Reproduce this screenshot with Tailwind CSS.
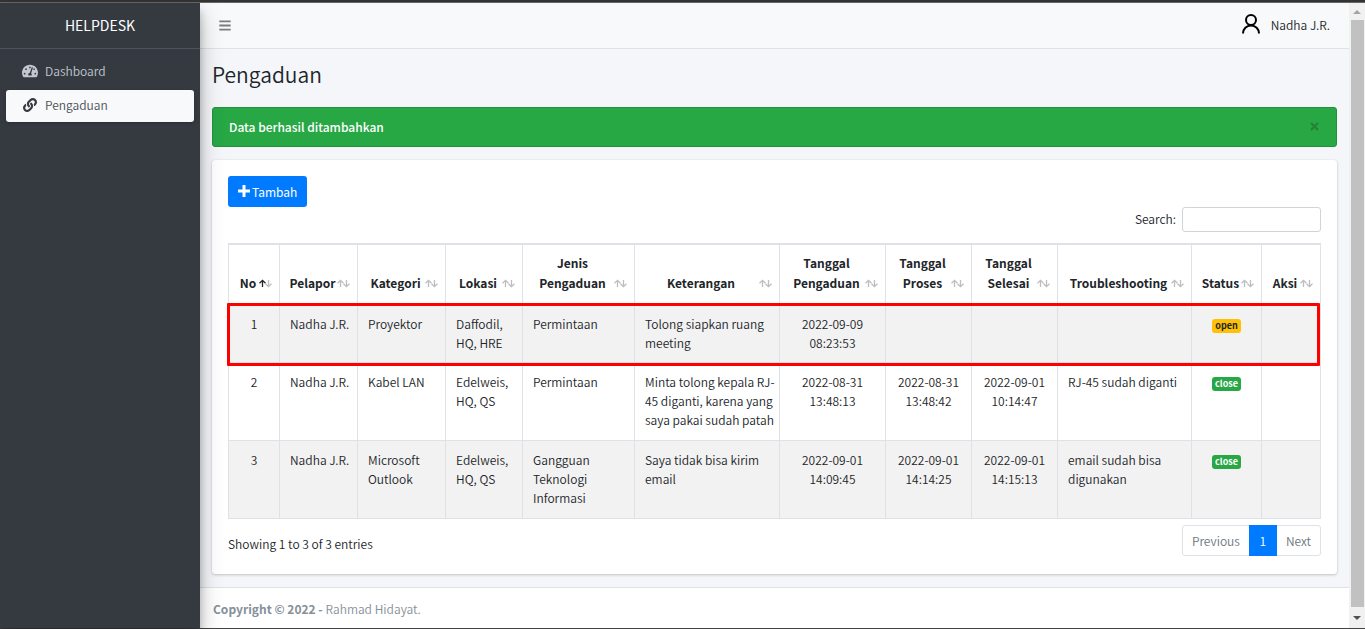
<!DOCTYPE html>
<html lang="id">
<head>
<meta charset="utf-8">
<title>Helpdesk - Pengaduan</title>
<script src="https://cdn.jsdelivr.net/npm/@tailwindcss/browser@4"></script>
</head>
<body class="flex h-screen flex-col overflow-hidden bg-[#f4f6f9] font-['Noto_Sans_CJK_SC','Source_Sans_Pro',sans-serif] text-[12px] leading-[19px] font-[350] text-[#212529]">
<svg class="hidden" aria-hidden="true">
  <symbol id="arrow-up" viewBox="0 0 7 9"><path d="M3.500 8V1.500M0.500 4.300L3.500 1.300L6.500 4.300" fill="none" stroke="currentColor" stroke-width="1.300"/></symbol>
  <symbol id="arrow-down" viewBox="0 0 7 9"><path d="M3.500 1V7.500M0.500 4.700L3.500 7.700L6.500 4.700" fill="none" stroke="currentColor" stroke-width="1.300"/></symbol>
</svg>
<div class="h-[3px] shrink-0 border-b border-[#666] bg-[#333]"></div>
<div class="flex min-h-0 flex-1">
  <aside class="z-10 w-[200px] shrink-0 bg-[#343a40] shadow-[0_11px_22px_rgba(0,0,0,0.25),0_8px_8px_rgba(0,0,0,0.22)]">
    <a href="#" class="flex h-[46px] items-center justify-center border-b border-[#4b545c] text-[14px] font-normal text-white">HELPDESK</a>
    <nav class="flex flex-col gap-[2px] px-[6px] pt-[7px]">
      <a href="#" class="flex h-8 items-center gap-[7px] rounded-[3px] pb-[3px] pl-4 text-[#c2c7d0]">
        <svg class="h-4 w-4" viewBox="0 0 576 512" fill="currentColor"><path d="M288 32C128.940 32 0 160.940 0 320c0 52.800 14.250 102.260 39.060 144.800 5.610 9.620 16.300 15.200 27.440 15.200h443c11.140 0 21.830-5.580 27.440-15.200C561.750 422.260 576 372.800 576 320c0-159.060-128.940-288-288-288zm0 64c14.710 0 26.580 10.130 30.320 23.650-1.110 2.260-2.640 4.230-3.450 6.670l-9.220 27.670c-5.130 3.490-10.970 6.010-17.640 6.010-17.670 0-32-14.330-32-32S270.330 96 288 96zM96 384c-17.670 0-32-14.330-32-32s14.330-32 32-32 32 14.330 32 32-14.330 32-32 32zm48-160c-17.670 0-32-14.330-32-32s14.330-32 32-32 32 14.330 32 32-14.330 32-32 32zm246.770-72.410l-61.330 184C343.130 347.330 352 364.540 352 384c0 11.720-3.380 22.550-8.880 32H232.880c-5.500-9.450-8.880-20.280-8.880-32 0-33.940 26.500-61.430 59.900-63.590l61.340-184.010c4.170-12.560 17.730-19.450 30.360-15.170 12.570 4.190 19.350 17.790 15.170 30.360zm14.660 57.200l15.520-46.550c3.470-1.290 7.130-2.230 11.050-2.230 17.670 0 32 14.330 32 32s-14.330 32-32 32c-11.380-.01-20.890-6.280-26.570-15.220zM480 384c-17.670 0-32-14.330-32-32s14.330-32 32-32 32 14.330 32 32-14.330 32-32 32z"/></svg>
        Dashboard
      </a>
      <a href="#" class="flex h-8 items-center gap-[7px] rounded-[3px] bg-[#f8f9fa] pb-[3px] pl-4 text-[#495057] shadow-[0_1px_3px_rgba(0,0,0,0.24)]">
        <svg class="h-[14px] w-4 text-[#343a40]" viewBox="0 0 512 512" fill="currentColor"><path d="M326.612 185.391c59.747 59.809 58.927 155.698.36 214.590-.11.12-.24.25-.36.37l-67.200 67.200c-59.270 59.270-155.699 59.262-214.960 0-59.270-59.260-59.270-155.700 0-214.960l37.106-37.106c9.840-9.840 26.786-3.300 27.294 10.606.648 17.722 3.826 35.527 9.690 52.721 1.986 5.822.567 12.262-3.783 16.612l-13.087 13.087c-28.026 28.026-28.905 73.660-1.155 101.960 28.024 28.579 74.086 28.749 102.325.51l67.200-67.190c28.191-28.191 28.073-73.757 0-101.830-3.701-3.694-7.429-6.564-10.341-8.569a16.037 16.037 0 0 1-6.947-12.606c-.396-10.567 3.348-21.456 11.698-29.806l21.054-21.055c5.521-5.521 14.182-6.199 20.584-1.731a152.482 152.482 0 0 1 20.522 17.197zM467.547 44.449c-59.261-59.262-155.690-59.270-214.960 0l-67.200 67.200c-.12.12-.25.25-.36.37-58.566 58.892-59.387 154.781.36 214.590a152.454 152.454 0 0 0 20.521 17.196c6.402 4.468 15.064 3.789 20.584-1.731l21.054-21.055c8.350-8.350 12.094-19.239 11.698-29.806a16.037 16.037 0 0 0-6.947-12.606c-2.912-2.005-6.640-4.875-10.341-8.569-28.073-28.073-28.191-73.639 0-101.830l67.200-67.190c28.239-28.239 74.300-28.069 102.325.51 27.750 28.300 26.872 73.934-1.155 101.960l-13.087 13.087c-4.350 4.350-5.769 10.790-3.783 16.612 5.864 17.194 9.042 34.999 9.690 52.721.509 13.906 17.454 20.446 27.294 10.606l37.106-37.106c59.271-59.259 59.271-155.699.001-214.959z"/></svg>
        Pengaduan
      </a>
    </nav>
  </aside>

  <div class="flex min-w-0 flex-1 flex-col">
    <header class="flex h-[46px] shrink-0 items-center justify-between border-b border-[#dee2e6] bg-[#f8f9fa] px-[19px]">
      <button type="button" aria-label="Menu" class="text-[#7b7c7d]">
        <svg class="h-[13px] w-3" viewBox="0 0 448 512" fill="currentColor"><path d="M0 60h448v72H0zM0 220h448v72H0zM0 380h448v72H0z"/></svg>
      </button>
      <a href="#" class="flex items-center gap-[11px] pb-[2px]">
        <svg class="mb-[2px] h-5 w-[18px] text-black" viewBox="0 0 18 20" fill="none" stroke="currentColor" stroke-width="2"><circle cx="9" cy="6" r="5"/><path d="M1 19.500C1 15 4.500 11.500 9 11.500S17 15 17 19.500"/></svg>
        Nadha J.R.
      </a>
    </header>

    <main class="min-h-0 flex-1 px-3 pt-[10px]">
      <h1 class="text-[21px] leading-[30px]">Pengaduan</h1>
      <div role="alert" class="mt-[18px] flex h-10 items-center justify-between rounded-[3px] border border-[#23923d] bg-[#28a745] px-4 pb-[2px] font-medium text-white">
        Data berhasil ditambahkan
        <button type="button" aria-label="Tutup" class="pr-px text-[#1c7430]/70">
          <svg class="h-[9px] w-[9px]" viewBox="0 0 9 9" fill="none" stroke="currentColor" stroke-width="2"><path d="M1 1L8 8M8 1L1 8"/></svg>
        </button>
      </div>

      <section class="mt-[13px] rounded-[3px] bg-white px-4 pt-4 pb-[18px] shadow-[0_0_1px_rgba(0,0,0,0.125),0_1px_3px_rgba(0,0,0,0.2)]">
        <button type="button" class="flex h-[31px] items-center gap-[2px] rounded-[3px] bg-[#007bff] px-[10px] pb-px font-normal text-white">
          <svg class="h-3 w-3" viewBox="0 0 12 12" fill="currentColor"><path d="M4.500 0h3v4.500H12v3H7.500V12h-3V7.500H0v-3h4.500z"/></svg>
          Tambah
        </button>
        <div class="flex items-center justify-end gap-[6px]">
          <label for="search" class="pb-[3px]">Search:</label>
          <input id="search" type="search" class="h-[25px] w-[139px] rounded-[3px] border border-[#ced4da] bg-white px-2 outline-none">
        </div>

        <table class="mt-[11px] w-full table-fixed border-separate border-spacing-0 border-t-2 border-r border-[#dee2e6] [&_td]:border-b [&_td]:border-l [&_td]:border-[#dee2e6] [&_td]:pt-[9px] [&_td]:pr-[3px] [&_td]:pb-[11px] [&_td]:pl-[10px] [&_td]:align-top [&_td.text-center]:px-2 [&_th]:border-b [&_th]:border-l [&_th]:border-[#dee2e6]">
          <colgroup>
            <col class="w-[51px]"><col class="w-[78px]"><col class="w-[88px]"><col class="w-[77px]"><col class="w-[112px]"><col class="w-[145px]"><col class="w-[106px]"><col class="w-[86px]"><col class="w-[86px]"><col class="w-[134px]"><col class="w-[70px]"><col class="w-[59px]">
          </colgroup>
          <thead class="leading-5 [&_th]:h-[60px] [&_th]:pr-[7px] [&_th]:pb-[11px] [&_th]:pl-2 [&_th]:align-bottom [&_th>div]:flex [&_th>div]:items-end [&_th>div]:justify-between [&_th>div>span:first-child]:flex-1 [&_th>div>span:last-child]:flex [&_th>div>span:last-child]:h-5 [&_th>div>span:last-child]:items-center [&_th>div>span:last-child]:text-[#bdbebf] [&_svg]:h-[9px] [&_svg]:w-[7px] [&_svg+svg]:-ml-px">
            <tr>
              <th><div><span>No</span><span><svg class="text-[#212529]"><use href="#arrow-up"/></svg><svg><use href="#arrow-down"/></svg></span></div></th>
              <th><div><span>Pelapor</span><span><svg><use href="#arrow-up"/></svg><svg><use href="#arrow-down"/></svg></span></div></th>
              <th><div><span>Kategori</span><span><svg><use href="#arrow-up"/></svg><svg><use href="#arrow-down"/></svg></span></div></th>
              <th><div><span>Lokasi</span><span><svg><use href="#arrow-up"/></svg><svg><use href="#arrow-down"/></svg></span></div></th>
              <th><div><span>Jenis<br>Pengaduan</span><span><svg><use href="#arrow-up"/></svg><svg><use href="#arrow-down"/></svg></span></div></th>
              <th><div><span>Keterangan</span><span><svg><use href="#arrow-up"/></svg><svg><use href="#arrow-down"/></svg></span></div></th>
              <th><div><span>Tanggal<br>Pengaduan</span><span><svg><use href="#arrow-up"/></svg><svg><use href="#arrow-down"/></svg></span></div></th>
              <th><div><span>Tanggal<br>Proses</span><span><svg><use href="#arrow-up"/></svg><svg><use href="#arrow-down"/></svg></span></div></th>
              <th><div><span>Tanggal<br>Selesai</span><span><svg><use href="#arrow-up"/></svg><svg><use href="#arrow-down"/></svg></span></div></th>
              <th><div><span>Troubleshooting</span><span><svg><use href="#arrow-up"/></svg><svg><use href="#arrow-down"/></svg></span></div></th>
              <th><div><span>Status</span><span><svg><use href="#arrow-up"/></svg><svg><use href="#arrow-down"/></svg></span></div></th>
              <th><div><span>Aksi</span><span><svg><use href="#arrow-up"/></svg><svg><use href="#arrow-down"/></svg></span></div></th>
            </tr>
          </thead>
          <tbody>
            <tr class="relative bg-[#f2f2f2] [&>td]:pb-[10px]">
              <td class="text-center">1<div class="pointer-events-none absolute -top-[2px] right-0 -bottom-[3px] -left-px rounded-[1px] border-3 border-[#ff0000]"></div></td><td>Nadha J.R.</td><td>Proyektor</td><td>Daffodil, HQ, HRE</td><td>Permintaan</td><td>Tolong siapkan ruang meeting</td><td class="text-center">2022-09-09 08:23:53</td><td></td><td></td><td></td>
              <td class="text-center"><span class="inline-block rounded-[3px] bg-[#ffc107] px-[3px] text-[9px] leading-[14px] font-bold">open</span></td><td></td>
            </tr>
            <tr>
              <td class="text-center">2</td><td>Nadha J.R.</td><td>Kabel LAN</td><td>Edelweis, HQ, QS</td><td>Permintaan</td><td>Minta tolong kepala RJ-<wbr>45 diganti, karena yang saya pakai sudah patah</td><td class="text-center">2022-08-31 13:48:13</td><td class="text-center">2022-08-31 13:48:42</td><td class="text-center">2022-09-01 10:14:47</td><td>RJ-45 sudah diganti</td>
              <td class="text-center"><span class="inline-block rounded-[3px] bg-[#28a745] px-[3px] text-[9px] leading-[14px] font-bold text-white">close</span></td><td></td>
            </tr>
            <tr class="bg-[#f2f2f2]">
              <td class="text-center">3</td><td>Nadha J.R.</td><td>Microsoft Outlook</td><td>Edelweis, HQ, QS</td><td>Gangguan Teknologi Informasi</td><td>Saya tidak bisa kirim email</td><td class="text-center">2022-09-01 14:09:45</td><td class="text-center">2022-09-01 14:14:25</td><td class="text-center">2022-09-01 14:15:13</td><td>email sudah bisa digunakan</td>
              <td class="text-center"><span class="inline-block rounded-[3px] bg-[#28a745] px-[3px] text-[9px] leading-[14px] font-bold text-white">close</span></td><td></td>
            </tr>
          </tbody>
        </table>

        <div class="mt-[6px] flex items-center justify-between">
          <p class="pt-[5px]">Showing 1 to 3 of 3 entries</p>
          <nav aria-label="Halaman" class="flex h-[31px] rounded-[3px] border border-[#dee2e6] text-[#6c757d]">
            <button type="button" class="px-[9px] pb-px">Previous</button>
            <button type="button" class="-my-px w-7 bg-[#007bff] pb-px text-white">1</button>
            <button type="button" class="px-[9px] pb-px">Next</button>
          </nav>
        </div>
      </section>
    </main>

    <footer class="flex h-[41px] shrink-0 items-center border-t border-[#dee2e6] bg-white px-[13px] text-[#869099]">
      <p><strong>Copyright © 2022 -</strong> Rahmad Hidayat.</p>
    </footer>
  </div>

  <div class="flex w-4 shrink-0 flex-col items-center bg-[#f1f1f1]" aria-hidden="true">
    <div class="flex h-[17px] items-center"><svg class="h-1 w-2" viewBox="0 0 8 4"><path d="M0 4L4 0L8 4z" fill="#a3a3a3"/></svg></div>
    <div class="w-[13px] flex-1 bg-[#c1c1c1]"></div>
    <div class="flex h-[21px] items-center"><svg class="h-1 w-2" viewBox="0 0 8 4"><path d="M0 0L4 4L8 0z" fill="#505050"/></svg></div>
  </div>
</div>
<div class="h-px shrink-0 bg-[#444]"></div>
</body>
</html>
